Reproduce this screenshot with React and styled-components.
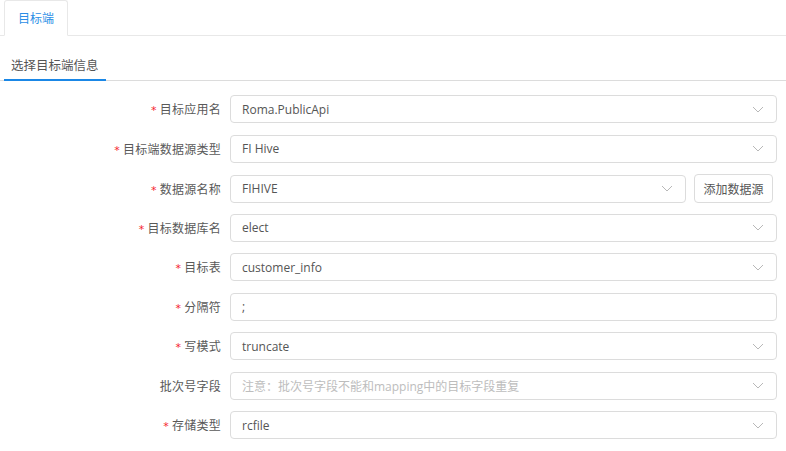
import React from 'react'
import styled, { createGlobalStyle } from 'styled-components'

const rows = [
  { label: '目标应用名', required: true, value: 'Roma.PublicApi', kind: 'select' },
  { label: '目标端数据源类型', required: true, value: 'FI Hive', kind: 'select' },
  { label: '数据源名称', required: true, value: 'FIHIVE', kind: 'select', action: '添加数据源' },
  { label: '目标数据库名', required: true, value: 'elect', kind: 'select' },
  { label: '目标表', required: true, value: 'customer_info', kind: 'select' },
  { label: '分隔符', required: true, value: ';', kind: 'input' },
  { label: '写模式', required: true, value: 'truncate', kind: 'select' },
  { label: '批次号字段', required: false, placeholder: '注意：批次号字段不能和mapping中的目标字段重复', kind: 'select' },
  { label: '存储类型', required: true, value: 'rcfile', kind: 'select' },
]

const App = () => {
  return (
    <Page>
      <GlobalStyle />
      <TabBar>
        <Tab>目标端</Tab>
      </TabBar>
      <SubTabBar>
        <SubTab>选择目标端信息</SubTab>
      </SubTabBar>
      <Form>
        {rows.map(row => (
          <Row key={row.label}>
            <Label>
              {row.required && <Star>*</Star>}
              {row.label}
            </Label>
            <Control>
              <Field>
                {row.value
                  ? <Value>{row.value}</Value>
                  : <Placeholder>{row.placeholder}</Placeholder>}
                {row.kind === 'select' && <Chevron />}
              </Field>
              {row.action && <ActionButton>{row.action}</ActionButton>}
            </Control>
          </Row>
        ))}
      </Form>
    </Page>
  )
}

const Chevron = () => (
  <ChevronSvg width="12" height="7" viewBox="0 0 12 7">
    <path d="M1 1 L6 6 L11 1" fill="none" stroke="#b8b8b8" strokeWidth="1" />
  </ChevronSvg>
)

const GlobalStyle = createGlobalStyle`
  body {
    margin: 0;
    background: #fff;
    font-family: "Open Sans", "Noto Sans CJK SC", sans-serif;
  }
`

const Page = styled.div`
  width: 786px;
  height: 451px;
  overflow: hidden;
  background: #fff;
`

const TabBar = styled.div`
  height: 35px;
  border-bottom: 1px solid #e8e8e8;
  display: flex;
  align-items: flex-end;
  padding-left: 4px;
`

const Tab = styled.div`
  width: 64px;
  height: 36px;
  margin-bottom: -1px;
  box-sizing: border-box;
  border: 1px solid #e8e8e8;
  border-bottom-color: #fff;
  border-radius: 3px 3px 0 0;
  display: flex;
  align-items: center;
  justify-content: center;
  font-size: 12px;
  color: #2b8ee6;
`

const SubTabBar = styled.div`
  margin-top: 17px;
  height: 27px;
  border-bottom: 1px solid #dcdcdc;
  padding-left: 4px;
  display: flex;
`

const SubTab = styled.div`
  width: 102px;
  box-sizing: border-box;
  padding: 0 0 0 7px;
  height: 28px;
  border-bottom: 2px solid #1a87e6;
  font-size: 12.5px;
  line-height: 26px;
  color: #555;
`

const Form = styled.div`
  margin-top: 14px;
  display: flex;
  flex-direction: column;
  gap: 11.5px;
  padding-right: 9px;
`

const Row = styled.div`
  display: grid;
  grid-template-columns: 221px 1fr;
  column-gap: 9px;
  align-items: center;
  height: 28px;
`

const Label = styled.div`
  text-align: right;
  font-size: 12px;
  letter-spacing: 0.25px;
  color: #595959;
  white-space: nowrap;
`

const Star = styled.span`
  color: #f5222d;
  margin-right: 3px;
  font-size: 11px;
  font-family: "DejaVu Sans", sans-serif;
`

const Control = styled.div`
  display: flex;
  align-items: center;
  gap: 8px;
`

const Field = styled.div`
  flex: 1;
  height: 28px;
  box-sizing: border-box;
  border: 1px solid #dcdcdc;
  border-radius: 4px;
  padding: 0 10px 0 11px;
  display: flex;
  align-items: center;
  justify-content: space-between;
  font-size: 12px;
`

const Value = styled.span`
  color: #555;
`

const Placeholder = styled.span`
  color: #bdbdbd;
`

const ChevronSvg = styled.svg`
  flex-shrink: 0;
  margin-right: 2px;
`

const ActionButton = styled.div`
  width: 79px;
  height: 29px;
  box-sizing: border-box;
  border: 1px solid #dcdcdc;
  border-radius: 4px;
  display: flex;
  align-items: center;
  justify-content: center;
  font-size: 12px;
  color: #555;
  margin-right: 4px;
  background: #fff;
`

export default App
